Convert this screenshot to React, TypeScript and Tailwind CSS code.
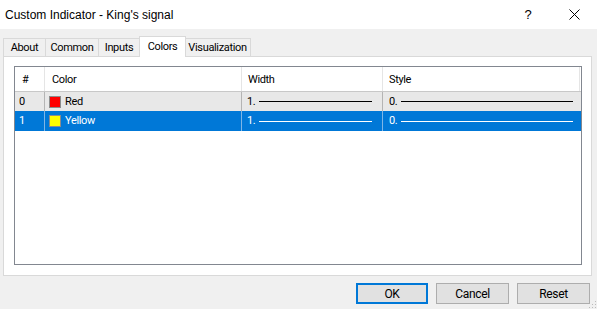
import React from "react";

const TABS = [
  { label: "About", w: "w-[43px]" },
  { label: "Common", w: "w-[54px]" },
  { label: "Inputs", w: "w-[42px]" },
  { label: "Colors", w: "w-[47px]" },
  { label: "Visualization", w: "w-[67px]" },
];

const ROWS = [
  { id: "0", color: "#ff0000", name: "Red", width: "1.", style: "0." },
  { id: "1", color: "#ffff00", name: "Yellow", width: "1.", style: "0." },
];

function Tab({ label, w, active }: { label: string; w: string; active: boolean }) {
  if (active) {
    return (
      <div className={`${w} h-[21px] -mb-px relative z-10 bg-white border border-b-0 border-[#d9d9d9] flex items-center justify-center -mx-px`}>
        {label}
      </div>
    );
  }
  return (
    <div className={`${w} h-[18px] pt-px bg-[#f0f0f0] border border-b-0 border-[#d9d9d9] flex items-center justify-center -ml-px first:ml-0`}>
      {label}
    </div>
  );
}

function Row({ row, selected }: { row: (typeof ROWS)[number]; selected: boolean }) {
  const bg = selected ? "bg-[#0078d7] text-white" : "bg-[#e8e8e8] text-black";
  const sep = selected ? "border-[#7fb6e6]" : "border-[#b4b4b4]";
  const line = selected ? "bg-white" : "bg-black";
  return (
    <div className={`flex ${selected ? "h-[20px]" : "h-[19px]"} ${bg}`}>
      <div className={`w-[30px] pl-[4px] pt-px flex items-center border-r ${sep}`}>{row.id}</div>
      <div className={`w-[197px] pl-[4px] flex items-center gap-[4px] border-r ${sep}`}>
        <span className="w-[12px] h-[12px] border border-[#8c8c8c]" style={{ backgroundColor: row.color }} />
        <span className="pt-px">{row.name}</span>
      </div>
      <div className={`w-[141px] pl-[5px] pr-[10px] flex items-center gap-[4px] border-r ${sep}`}>
        <span className="pt-px">{row.width}</span>
        <span className={`flex-1 h-px ${line}`} />
      </div>
      <div className="flex-1 pl-[6px] pr-[8px] flex items-center gap-[4px]">
        <span className="pt-px">{row.style}</span>
        <span className={`flex-1 h-px ${line}`} />
      </div>
    </div>
  );
}

export default function App() {
  return (
    <div className="relative w-[597px] h-[309px] bg-[#f0f0f0] flex flex-col overflow-hidden text-[11px] tracking-[-0.35px] text-black font-['Roboto',sans-serif]">
      {/* Title bar */}
      <div className="h-[29px] bg-white flex items-center shrink-0 tracking-normal">
        <span className="pl-[5px] font-['Liberation_Sans',sans-serif] text-[12px] flex-1">
          Custom Indicator - King's signal
        </span>
        <span className="w-[46px] text-center text-[13px] font-['Liberation_Sans',sans-serif]">?</span>
        <span className="w-[46px] flex justify-center">
          <svg width="11" height="11" viewBox="0 0 11 11">
            <path d="M0.5 0.5 L10.5 10.5 M10.5 0.5 L0.5 10.5" stroke="#000" strokeWidth="1" />
          </svg>
        </span>
      </div>

      {/* Tabs */}
      <div className="flex items-end h-[20px] mt-[7px] pl-[3px]">
        {TABS.map((t) => (
          <Tab key={t.label} label={t.label} w={t.w} active={t.label === "Colors"} />
        ))}
      </div>

      {/* Tab panel */}
      <div className="ml-[3px] mr-[5px] h-[220px] bg-white border border-[#d9d9d9] pt-[9px] pl-[10px] pr-[9px] pb-[10px] flex">
        <div className="flex-1 border border-[#828790] flex flex-col">
          <div className="flex h-[25px] border-b border-[#c8c8c8]">
            <div className="w-[30px] pl-[7px] pt-[2px] flex items-center border-r border-[#e5e5e5]">#</div>
            <div className="w-[197px] pl-[7px] pt-[2px] flex items-center border-r border-[#e5e5e5]">Color</div>
            <div className="w-[141px] pl-[6px] pt-[2px] flex items-center border-r border-[#e5e5e5]">Width</div>
            <div className="flex-1 pl-[6px] pt-[2px] flex items-center mr-[1px] border-r border-[#e5e5e5]">Style</div>
          </div>
          {ROWS.map((r, i) => (
            <Row key={r.id} row={r} selected={i === 1} />
          ))}
        </div>
      </div>

      {/* Buttons */}
      <div className="flex justify-end gap-[8px] pr-[7px] mt-[7px]">
        <button className="w-[72px] h-[21px] bg-[#e1e1e1] border-2 border-[#0078d7] text-[12px]">OK</button>
        <button className="w-[73px] h-[21px] bg-[#e1e1e1] border border-[#adadad] text-[12px]">Cancel</button>
        <button className="w-[73px] h-[21px] bg-[#e1e1e1] border border-[#adadad] text-[12px]">Reset</button>
      </div>
      <svg className="absolute left-[589px] top-[301px]" width="8" height="8" viewBox="0 0 8 8">
        <rect x="6" y="0" width="1" height="1" fill="#bcbcbc" />
        <rect x="3" y="3" width="1" height="1" fill="#bcbcbc" />
        <rect x="6" y="3" width="1" height="1" fill="#bcbcbc" />
        <rect x="0" y="6" width="1" height="1" fill="#bcbcbc" />
        <rect x="3" y="6" width="1" height="1" fill="#bcbcbc" />
        <rect x="6" y="6" width="1" height="1" fill="#bcbcbc" />
      </svg>
    </div>
  );
}
